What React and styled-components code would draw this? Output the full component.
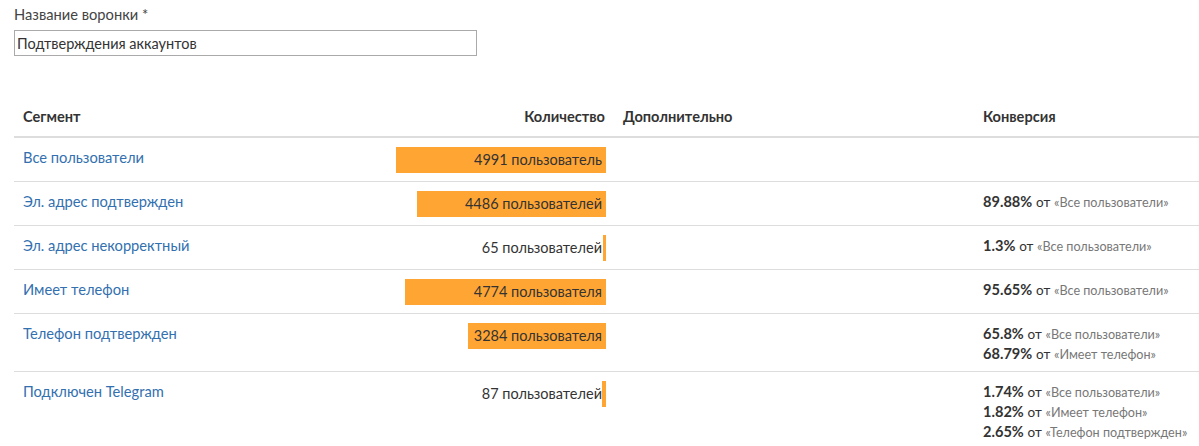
import React from "react";
import styled, { createGlobalStyle } from "styled-components";

const GlobalStyle = createGlobalStyle`
  html, body {
    margin: 0;
    padding: 0;
    background: #fff;
    overflow: hidden;
  }
  body {
    font-family: Lato, "Open Sans", "Liberation Sans", sans-serif;
    color: #333;
  }
`;

const MAX = 4991;
const BAR_MAX = 210;

const rows = [
  { name: "Все пользователи", count: 4991, label: "4991 пользователь", conv: [] },
  {
    name: "Эл. адрес подтвержден",
    count: 4486,
    label: "4486 пользователей",
    conv: [["89.88%", "Все пользователи"]],
  },
  {
    name: "Эл. адрес некорректный",
    count: 65,
    label: "65 пользователей",
    conv: [["1.3%", "Все пользователи"]],
  },
  {
    name: "Имеет телефон",
    count: 4774,
    label: "4774 пользователя",
    conv: [["95.65%", "Все пользователи"]],
  },
  {
    name: "Телефон подтвержден",
    count: 3284,
    label: "3284 пользователя",
    conv: [
      ["65.8%", "Все пользователи"],
      ["68.79%", "Имеет телефон"],
    ],
  },
  {
    name: "Подключен Telegram",
    count: 87,
    label: "87 пользователей",
    conv: [
      ["1.74%", "Все пользователи"],
      ["1.82%", "Имеет телефон"],
      ["2.65%", "Телефон подтвержден"],
    ],
  },
];

const App = () => {
  return (
    <Page>
      <GlobalStyle />
      <Field>
        <Label>Название воронки *</Label>
        <Input defaultValue="Подтверждения аккаунтов" />
      </Field>
      <Table>
        <colgroup>
          <col style={{ width: 370 }} />
          <col style={{ width: 230 }} />
          <col style={{ width: 360 }} />
          <col />
        </colgroup>
        <thead>
          <tr>
            <Th>Сегмент</Th>
            <Th $right>Количество</Th>
            <Th>Дополнительно</Th>
            <Th>Конверсия</Th>
          </tr>
        </thead>
        <tbody>
          {rows.map((r) => (
            <Row key={r.name}>
              <Td>
                <SegmentLink href="#">{r.name}</SegmentLink>
              </Td>
              <Td $right>
                <Bar>
                  <Fill style={{ width: Math.max(3, Math.round((r.count / MAX) * BAR_MAX)) }} />
                  <BarText>{r.label}</BarText>
                </Bar>
              </Td>
              <Td />
              <Td>
                {r.conv.map(([pct, from]) => (
                  <ConvLine key={from}>
                    <Pct>{pct}</Pct> <From>от</From> <Ref>«{from}»</Ref>
                  </ConvLine>
                ))}
              </Td>
            </Row>
          ))}
        </tbody>
      </Table>
    </Page>
  );
};

export default App;

const Page = styled.div`
  padding: 4px 0 0 14px;
  width: 1185px;
`;

const Field = styled.div`
  display: flex;
  flex-direction: column;
  gap: 6px;
`;

const Label = styled.label`
  font-size: 14.7px;
  line-height: 20px;
  color: #444;
`;

const Input = styled.input`
  box-sizing: border-box;
  width: 463px;
  height: 26px;
  border: 1px solid #aaa;
  padding: 0 2px;
  font-family: inherit;
  font-size: 14.5px;
  color: #333;
  outline: none;
`;

const Table = styled.table`
  margin-top: 42px;
  width: 1185px;
  border-collapse: collapse;
  table-layout: fixed;
`;

const Th = styled.th`
  padding: 9px 9px;
  font-size: 14.6px;
  line-height: 20px;
  font-weight: 700;
  color: #333;
  text-align: ${(p) => (p.$right ? "right" : "left")};
  border-bottom: 2px solid #ddd;
  white-space: nowrap;
`;

const Row = styled.tr`
  border-bottom: 1px solid #ddd;
`;

const Td = styled.td`
  padding: 9px 9px 8px;
  vertical-align: top;
  font-size: 14.7px;
  line-height: 20px;
  text-align: ${(p) => (p.$right ? "right" : "left")};
  white-space: nowrap;
  padding-right: ${(p) => (p.$right ? "8px" : "9px")};
`;

const SegmentLink = styled.a`
  color: #3270b0;
  text-decoration: none;
`;

const Bar = styled.div`
  position: relative;
  height: 26px;
  display: flex;
  justify-content: flex-end;
  align-items: center;
`;

const Fill = styled.div`
  position: absolute;
  top: 0;
  right: 0;
  bottom: 0;
  background: #ffa534;
`;

const BarText = styled.span`
  position: relative;
  padding-right: 4px;
  font-size: 14.5px;
  color: #333;
`;

const ConvLine = styled.div`
  height: 20px;
  line-height: 20px;
  white-space: nowrap;
`;

const Pct = styled.b`
  font-size: 14.6px;
  font-weight: 700;
  color: #333;
`;

const From = styled.span`
  font-size: 13.5px;
  color: #333;
`;

const Ref = styled.span`
  font-size: 12.6px;
  color: #777;
`;
